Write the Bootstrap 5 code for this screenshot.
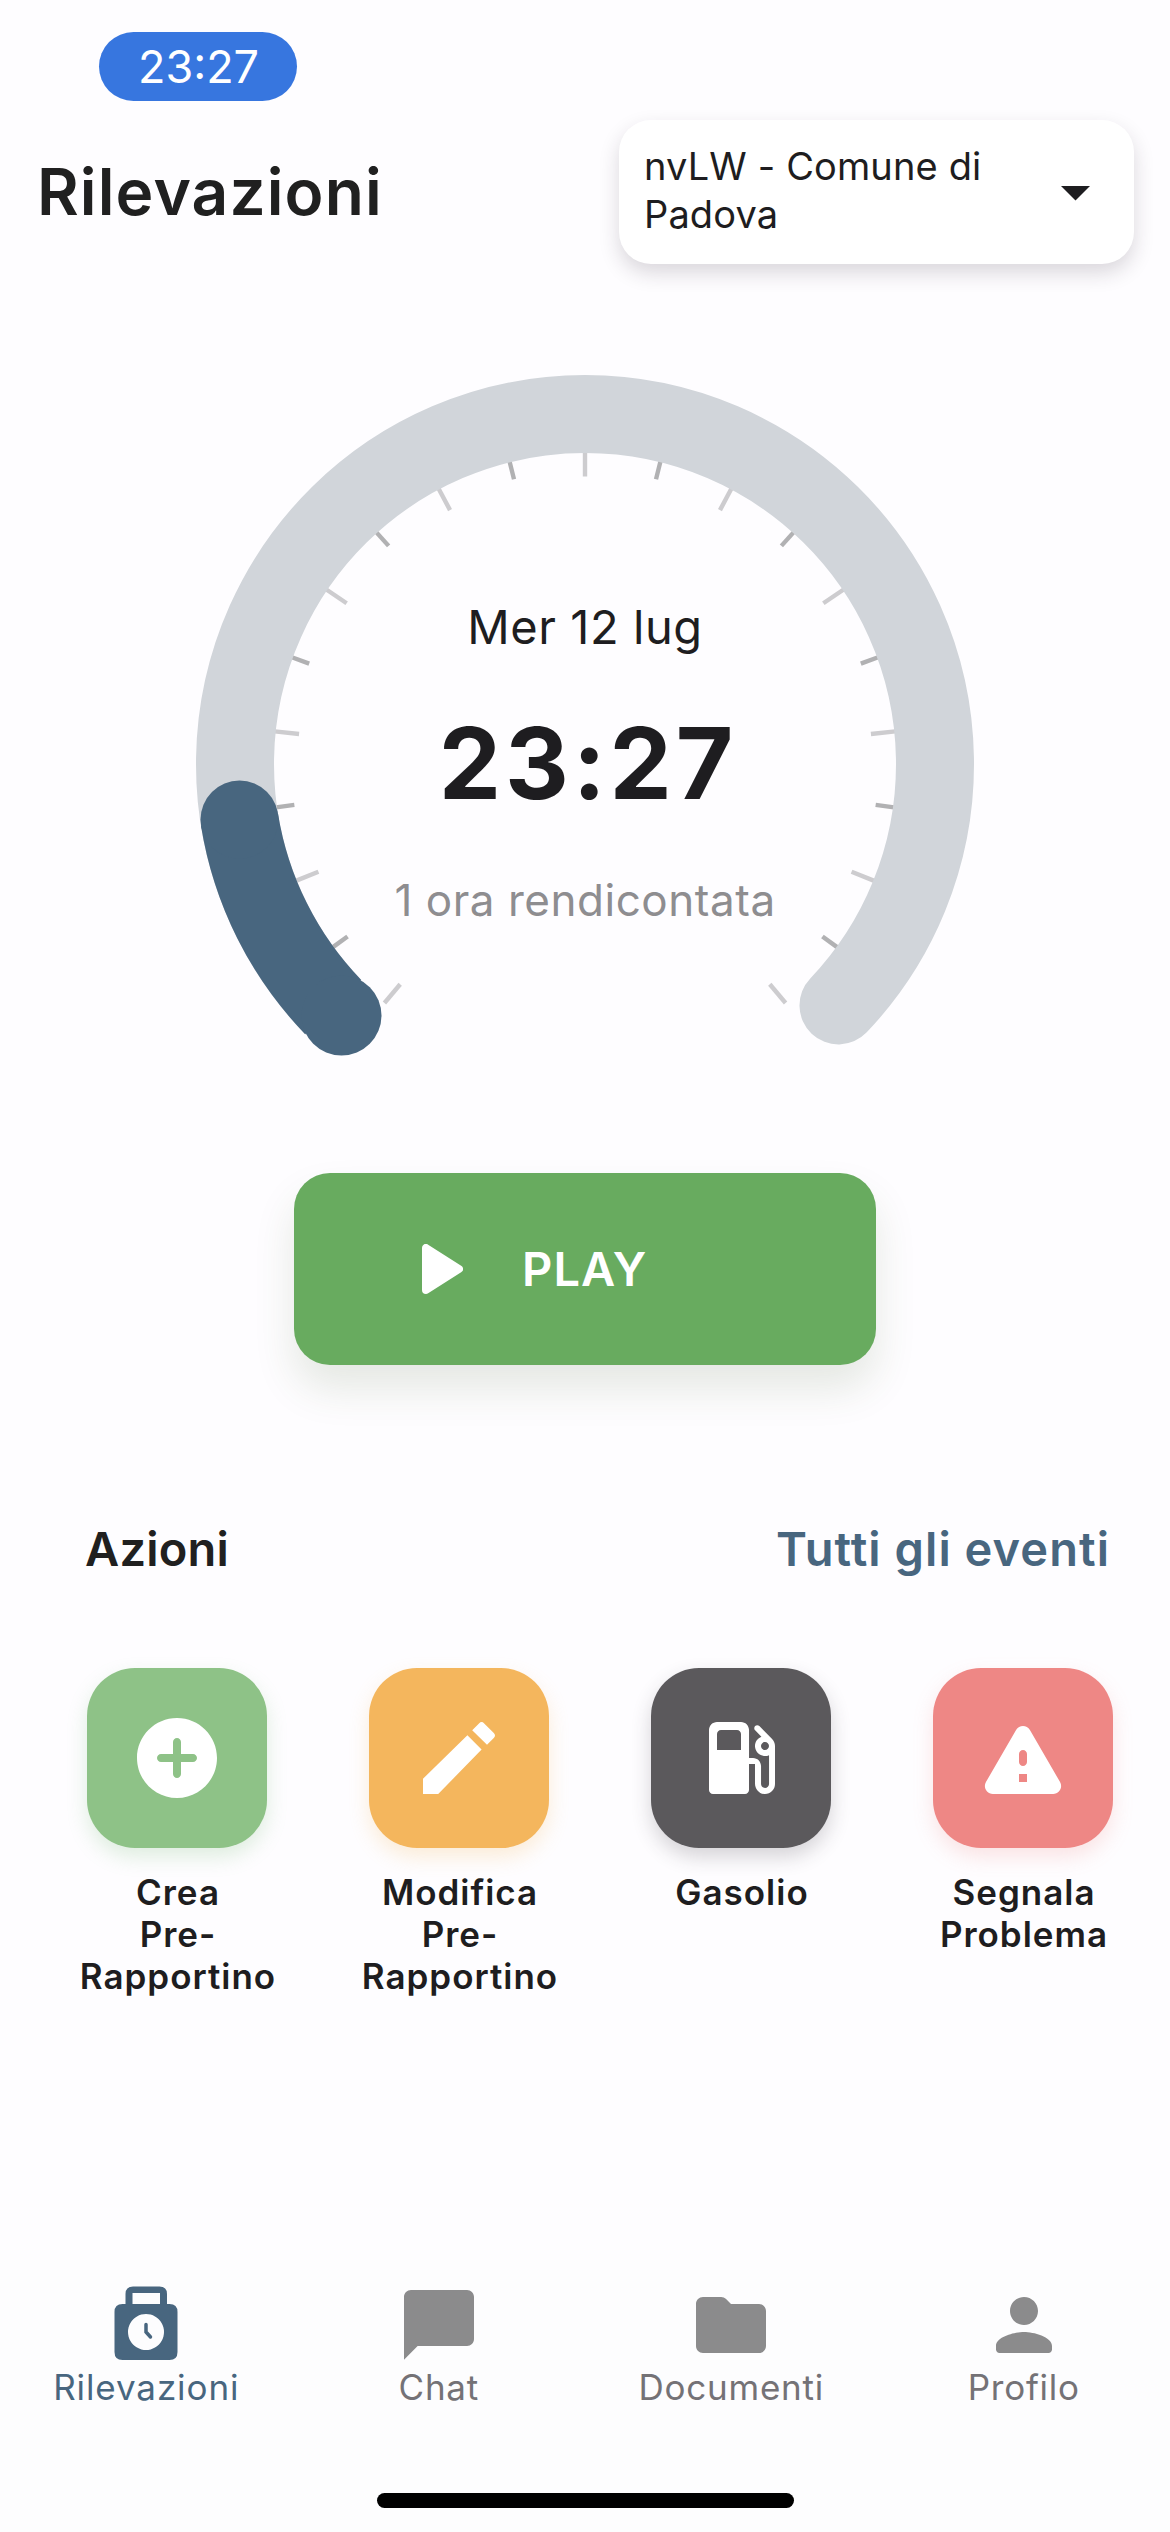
<!DOCTYPE html>
<html lang="it">
<head>
<meta charset="utf-8">
<meta name="viewport" content="width=device-width, initial-scale=1">
<title>Rilevazioni</title>
<link href="https://cdn.jsdelivr.net/npm/bootstrap@5.3.0/dist/css/bootstrap.min.css" rel="stylesheet">
<style>
  body { font-family: Inter, "Liberation Sans", sans-serif; background: #fefdff; color: #1e1d20; }
  .screen { width: 1170px; height: 2532px; overflow: hidden; }

  .status-row { padding: 32px 0 0 99px; }
  .clock-pill { width: 198px; height: 69px; background: #3776df; color: #fff; font-size: 45px; font-weight: 400; line-height: 69px; padding-left: 1px; }

  .top-bar { height: 144px; margin-top: 19px; padding: 0 36px 0 37px; }
  .page-title { font-size: 64px; font-weight: 600; letter-spacing: 1.12px; line-height: 1.2; padding-top: 1px; color: #202020; }
  .site-select { width: 515px; height: 144px; border-radius: 32px; background: #fff; padding: 0 44px 3px 25px; font-size: 38px; line-height: 47.7px; letter-spacing: .13px;
    box-shadow: 0 9px 20px rgba(40, 30, 50, .17); }
  .site-select .caret { width: 29px; height: 15px; margin-top: 6px; }

  .gauge { width: 780px; height: 684px; margin-top: 110px; display: grid; }
  .gauge > * { grid-area: 1 / 1; }
  .gauge-text { padding-top: 184px; }
  .gauge-text div { line-height: 137px; }
  .g-day { font-size: 47px; letter-spacing: .56px; }
  .g-time { font-size: 99px; font-weight: 700; letter-spacing: 3.83px; padding-left: 6px; }
  .g-sum { font-size: 44px; letter-spacing: .54px; color: #8e8d90; }

  .play-btn, .play-btn:hover { width: 582px; height: 192px; margin-top: 115px; padding: 0 0 0 128px; border: 0; border-radius: 36px; background: #68ab5f; color: #fff;
    font-size: 47px; font-weight: 600; letter-spacing: 1.1px; box-shadow: 0 24px 40px rgba(60, 90, 40, .13); }
  .play-btn svg { width: 41px; height: 50px; margin-right: 59px; }

  .section-head { margin-top: 154px; padding: 0 60px 0 85px; font-size: 47px; font-weight: 600; line-height: 60px; color: #202020; }
  .section-head span { letter-spacing: .2px; }
  .section-head a { color: #48667f; letter-spacing: 1.05px; }

  .actions { margin-top: 89px; padding: 0 36px; gap: 0; }
  .action { width: 282px; }
  .action-tile { width: 180px; height: 180px; border-radius: 48px; }
  .action-tile svg { width: 96px; height: 96px; fill: #fff; }
  .action-name { margin-top: 23px; padding-left: 2px; font-size: 35px; font-weight: 600; line-height: 42px; letter-spacing: .98px; }
  .t-green { background: #8ec287; box-shadow: 0 9px 20px rgba(120, 190, 120, .24); }
  .t-amber { background: #f4b65d; box-shadow: 0 9px 20px rgba(244, 182, 93, .24); }
  .t-slate { background: #5b595c; box-shadow: 0 9px 20px rgba(50, 45, 55, .2); }
  .t-coral { background: #ee8785; box-shadow: 0 9px 20px rgba(238, 135, 133, .22); }

  .tab-bar { height: 272px; background: #fdfdfe; padding-top: 23px; }
  .tab-item { color: #747276; font-size: 35px; line-height: 40px; letter-spacing: .75px; padding: 0; }
  .tab-item svg { width: 84px; height: 84px; fill: #8b8b8c; }
  .tab-item.active { color: #48667f; letter-spacing: .9px; }
  .tab-item.active svg { fill: #48667f; }
  .home-bar { width: 417px; height: 15px; margin-bottom: 24px; background: #000; }
</style>
<script src="https://cdn.jsdelivr.net/npm/bootstrap@5.3.0/dist/js/bootstrap.bundle.min.js"></script>
</head>
<body>
<div class="screen d-flex flex-column">
  <div class="status-row">
    <div class="clock-pill rounded-pill text-center">23:27</div>
  </div>

  <header class="top-bar d-flex align-items-center justify-content-between">
    <h1 class="page-title m-0">Rilevazioni</h1>
    <div class="site-select d-flex align-items-center justify-content-between" role="button">
      <span>nvLW - Comune di<br>Padova</span>
      <svg class="caret flex-shrink-0" viewBox="0 0 29 15"><path d="M0 0H29L14.5 14.5Z" fill="#1e1d20"/></svg>
    </div>
  </header>

  <section class="gauge align-self-center flex-shrink-0">
    <svg width="780" height="684" viewBox="-390 -390 780 684" fill="none">
      <g id="ticks" stroke-width="4.4"></g>
      <path d="M-253.5 241.4A350 350 0 1 1 253.5 241.4" stroke="#d1d5da" stroke-width="78" stroke-linecap="round"/>
      <path d="M-251.8 243.1A350 350 0 0 1 -345.5 55.6" stroke="#48667f" stroke-width="78"/>
      <circle cx="-345.5" cy="55.6" r="39" fill="#48667f"/>
      <circle cx="-243.5" cy="251.5" r="40" fill="#48667f"/>
    </svg>
    <div class="gauge-text text-center">
      <div class="g-day">Mer 12 lug</div>
      <div class="g-time">23:27</div>
      <div class="g-sum">1 ora rendicontata</div>
    </div>
  </section>

  <button class="play-btn btn d-flex align-items-center align-self-center flex-shrink-0" type="button">
    <svg viewBox="0 0 41 50"><path d="M4 4V46L37 25Z" fill="#fff" stroke="#fff" stroke-width="8" stroke-linejoin="round"/></svg>
    PLAY
  </button>

  <div class="section-head d-flex justify-content-between">
    <span>Azioni</span>
    <a href="#" class="text-decoration-none">Tutti gli eventi</a>
  </div>

  <div class="actions d-flex">
    <div class="action d-flex flex-column align-items-center flex-shrink-0">
      <div class="action-tile t-green d-flex align-items-center justify-content-center">
        <svg viewBox="0 0 24 24"><path d="M12 2C6.48 2 2 6.48 2 12s4.48 10 10 10 10-4.48 10-10S17.52 2 12 2zm4 11h-3v3c0 .55-.45 1-1 1s-1-.45-1-1v-3H8c-.55 0-1-.45-1-1s.45-1 1-1h3V8c0-.55.45-1 1-1s1 .45 1 1v3h3c.55 0 1 .45 1 1s-.45 1-1 1z"/></svg>
      </div>
      <div class="action-name text-center">Crea<br>Pre-<br>Rapportino</div>
    </div>
    <div class="action d-flex flex-column align-items-center flex-shrink-0">
      <div class="action-tile t-amber d-flex align-items-center justify-content-center">
        <svg viewBox="0 0 24 24"><path d="M3 21V17.2L14.1 6.3L17.65 9.9L6.8 21ZM15.3 5.05L17 3.35Q17.65 2.7 18.3 3.35L20.7 5.75Q21.3 6.4 20.7 7L19 8.7Z"/></svg>
      </div>
      <div class="action-name text-center">Modifica<br>Pre-<br>Rapportino</div>
    </div>
    <div class="action d-flex flex-column align-items-center flex-shrink-0">
      <div class="action-tile t-slate d-flex align-items-center justify-content-center">
        <svg viewBox="0 0 24 24"><path fill-rule="evenodd" d="M19.77 7.23l.01-.01-3.19-3.19c-.29-.29-.77-.29-1.06 0-.29.29-.29.77 0 1.06l1.58 1.58c-1.05.4-1.76 1.47-1.58 2.71.15 1.1 1.1 1.99 2.21 2.11.47.05.88-.03 1.27-.2v7.21c0 .55-.45 1-1 1s-1-.45-1-1V14c0-1.1-.9-2-2-2h-1V5c0-1.1-.9-2-2-2H6c-1.1 0-2 .9-2 2v15c0 .55.45 1 1 1h8c.55 0 1-.45 1-1v-6.5h1.5v4.86c0 1.31.94 2.5 2.24 2.63 1.5.15 2.76-1.02 2.76-2.49V9c0-.69-.28-1.32-.73-1.77zM12 10H6V6c0-.55.45-1 1-1h4c.55 0 1 .45 1 1v4zm6 0c-.55 0-1-.45-1-1s.45-1 1-1 1 .45 1 1-.45 1-1 1z"/></svg>
      </div>
      <div class="action-name text-center">Gasolio</div>
    </div>
    <div class="action d-flex flex-column align-items-center flex-shrink-0">
      <div class="action-tile t-coral d-flex align-items-center justify-content-center">
        <svg viewBox="0 0 24 24"><path d="M4.47 21h15.06c1.54 0 2.5-1.67 1.73-3L13.73 4.99c-.77-1.33-2.69-1.33-3.46 0L2.74 18c-.77 1.33.19 3 1.73 3zM12 14c-.55 0-1-.45-1-1v-2c0-.55.45-1 1-1s1 .45 1 1v2c0 .55-.45 1-1 1zm1 4h-2v-2h2v2z"/></svg>
      </div>
      <div class="action-name text-center">Segnala<br>Problema</div>
    </div>
  </div>

  <nav class="tab-bar mt-auto d-flex flex-column justify-content-between align-items-center flex-shrink-0">
    <div class="nav nav-fill w-100">
      <a class="tab-item nav-link active col-3 d-flex flex-column align-items-center" href="#">
        <svg viewBox="0 0 84 84"><path fill-rule="evenodd" d="M21.5 21V11Q21.5 3.5 29 3.5H55.5Q63 3.5 63 11V21H65.5Q73.500 21 73.500 29V69Q73.500 77 65.500 77H18.500Q10.500 77 10.500 69V29Q10.500 21 18.500 21ZM28.500 10V21H56V10ZM42 31a18 18 0 1 0 .01 0Z"/><path d="M42 41.500V49L46.500 54" fill="none" stroke="#48667f" stroke-width="3.500" stroke-linecap="round"/></svg>
        Rilevazioni
      </a>
      <a class="tab-item nav-link col-3 d-flex flex-column align-items-center" href="#">
        <svg viewBox="0 0 24 24"><path d="M2 21.900V4c0-1.100.9-2 2-2h16c1.100 0 2 .9 2 2v12c0 1.100-.9 2-2 2H5.900z"/></svg>
        Chat
      </a>
      <a class="tab-item nav-link col-3 d-flex flex-column align-items-center" href="#">
        <svg viewBox="0 0 24 24"><path d="M10.590 4.590C10.210 4.210 9.700 4 9.170 4H4c-1.100 0-2 .9-2 2v12c0 1.100.9 2 2 2h16c1.100 0 2-.9 2-2V8c0-1.100-.9-2-2-2h-8l-1.410-1.410z"/></svg>
        Documenti
      </a>
      <a class="tab-item nav-link col-3 d-flex flex-column align-items-center" href="#">
        <svg viewBox="0 0 24 24"><path d="M12 12c2.210 0 4-1.790 4-4s-1.790-4-4-4-4 1.790-4 4 1.790 4 4 4zm0 2c-2.670 0-8 1.340-8 4v1c0 .55.45 1 1 1h14c.55 0 1-.45 1-1v-1c0-2.660-5.330-4-8-4z"/></svg>
        Profilo
      </a>
    </div>
    <div class="home-bar rounded-pill"></div>
  </nav>
</div>
<script>
  // Scale marks every 14 degrees: even ones long and light, odd ones short and dark.
  const ticks = document.getElementById('ticks');
  for (let i = -10; i <= 10; i++) {
    const major = i % 2 === 0;
    const line = document.createElementNS('http://www.w3.org/2000/svg', 'line');
    line.setAttribute('y1', -312);
    line.setAttribute('y2', major ? -287.5 : -293.5);
    line.setAttribute('stroke', major ? '#cdcccf' : '#b1b1b3');
    line.setAttribute('transform', `rotate(${i * 14})`);
    ticks.appendChild(line);
  }
</script>
</body>
</html>
